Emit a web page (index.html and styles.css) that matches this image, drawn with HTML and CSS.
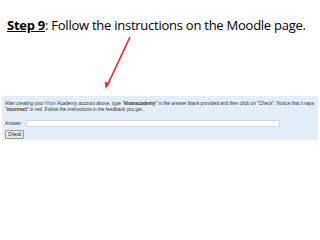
FILE: index.html
```html
<!DOCTYPE html>
<html>
<head>
<meta charset="utf-8">
<link rel="stylesheet" href="styles.css">
</head>
<body>
<div class="slide">
  <h1 class="title"><span class="step">Step 9</span>: Follow the instructions on the Moodle page.</h1>
  <svg class="arrow" width="320" height="240" viewBox="0 0 320 240">
    <line x1="130" y1="37" x2="108" y2="84" stroke="#e8202a" stroke-width="1.6"/>
    <path d="M105.5 89 L104.8 81.5 L108.6 83.3 L111.2 80.6 Z" fill="#e8202a"/>
  </svg>
  <div class="quiz">
    <p class="qtext">After creating your <span class="link">Khan</span> Academy account above, type "<b>khanacademy</b>" in the answer blank provided and then click on "Check". Notice that it says<br>"<b>incorrect</b>" in red. Follow the instructions in the feedback you get.</p>
    <div class="answer"><span class="label">Answer:</span><span class="input"></span></div>
    <div class="btnrow"><span class="btn">Check</span></div>
  </div>
</div>
</body>
</html>
```
FILE: styles.css
```css
html, body {
  margin: 0;
  padding: 0;
  background: #ffffff;
}
.slide {
  position: relative;
  width: 320px;
  height: 240px;
  overflow: hidden;
}
.title {
  margin: 0;
  padding: 17px 0 0 7px;
  font-family: "Open Sans", "Liberation Sans", sans-serif;
  font-weight: normal;
  font-size: 13px;
  line-height: 16px;
  color: #000;
  letter-spacing: -0.25px;
}
.step {
  font-weight: bold;
  text-decoration: underline;
}
.arrow {
  position: absolute;
  left: 0;
  top: 0;
}
.quiz {
  margin: 63px 2px 0 2px;
  background: #e4eef8;
  padding: 5px 3px 3px 3px;
  font-family: "Liberation Sans", Arial, sans-serif;
  font-size: 4.75px;
  color: #333;
  height: 36px;
}
.qtext {
  margin: 0;
  line-height: 5.5px;
}
.link {
  color: #3366cc;
}
.answer {
  display: flex;
  align-items: center;
  margin-top: 8px;
  gap: 4px;
}
.input {
  display: block;
  width: 252px;
  height: 5px;
  background: #fff;
  border: 0.5px solid #cfd8e0;
}
.btnrow {
  margin-top: 3px;
}
.btn {
  display: inline-block;
  padding: 1px 2px;
  background: #e8e8e8;
  border: 0.5px solid #999;
  border-radius: 1px;
  font-size: 4.75px;
  color: #222;
}
```
